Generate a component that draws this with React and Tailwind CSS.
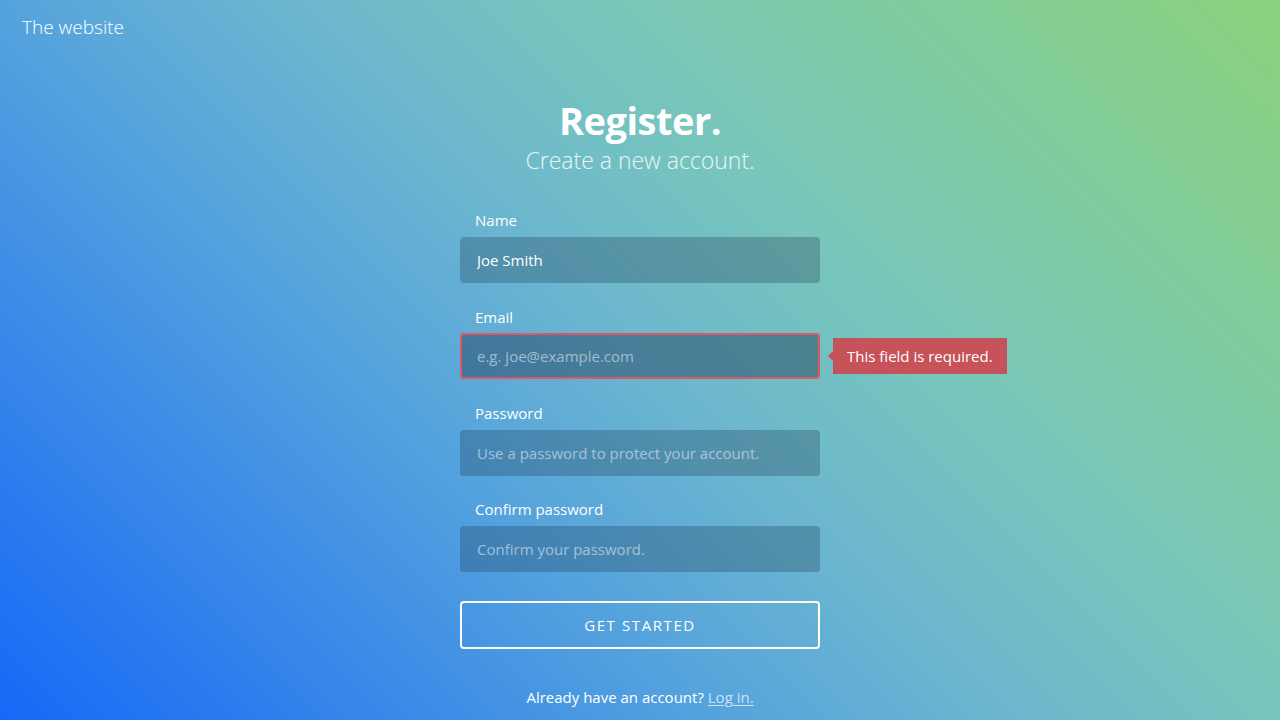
import { useState } from "react";

const Field = ({ label, placeholder, value, onChange, error, type = "text", gap = "mt-[7px]" }) => {
	return (
		<div className="flex flex-col">
			<label className="px-[15px] text-[15px] leading-[20px] text-white">{label}</label>
			<div className={`relative ${gap}`}>
				<input
					type={type}
					value={value}
					onChange={onChange}
					placeholder={placeholder}
					className={`h-[46px] w-full rounded-[4px] text-[15px] text-white placeholder:text-white/50 outline-none ${
						error ? "border-2 border-[#e4555f] bg-[#1c3a55]/45 px-[15px]" : "bg-[#1d3b52]/30 px-[17px]"
					}`}
				/>
				{error && (
					<div className="absolute left-[calc(100%+8px)] top-1/2 -translate-y-1/2 flex items-center">
						<span className="h-0 w-0 border-y-[6px] border-r-[6px] border-y-transparent border-r-[#c6525a]"></span>
						<span className="whitespace-nowrap bg-[#c6525a] px-[13px] py-[7px] text-[15px] leading-[20px] text-white outline outline-1 outline-[#b9565f]">
							{error}
						</span>
					</div>
				)}
			</div>
		</div>
	);
};

const App = () => {
	const [name, setName] = useState("Joe Smith");
	const [email, setEmail] = useState("");
	const [password, setPassword] = useState("");
	const [confirm, setConfirm] = useState("");

	return (
		<div
			className="relative flex min-h-screen w-full flex-col bg-[linear-gradient(45deg,#1668f7_0%,#55a3dd_36%,#6bb6cf_50%,#78c6bb_65%,#8ad27c_100%)] text-white"
			style={{ fontFamily: '"Open Sans", "Noto Sans", sans-serif' }}>
			<header className="px-[22px] pt-[14px]">
				<span className="text-[19px] font-light leading-[26px]">The website</span>
			</header>

			<main className="flex flex-col items-center">
				<h1 className="mt-[56px] text-[38px] font-bold leading-[48px] tracking-[-0.5px]">Register.</h1>
				<p className="text-[23px] font-light leading-[32px] text-white/85">Create a new account.</p>

				<form className="mt-[34px] flex w-[360px] flex-col" onSubmit={(e) => e.preventDefault()}>
					<Field label="Name" value={name} onChange={(e) => setName(e.target.value)} />
					<div className="mt-[24px]">
						<Field
							label="Email"
							gap="mt-[6px]"
							placeholder="e.g. joe@example.com"
							value={email}
							onChange={(e) => setEmail(e.target.value)}
							error="This field is required."
						/>
					</div>
					<div className="mt-[24px]">
						<Field
							label="Password"
							type="password"
							placeholder="Use a password to protect your account."
							value={password}
							onChange={(e) => setPassword(e.target.value)}
						/>
					</div>
					<div className="mt-[23px]">
						<Field
							label="Confirm password"
							type="password"
							placeholder="Confirm your password."
							value={confirm}
							onChange={(e) => setConfirm(e.target.value)}
						/>
					</div>
					<button
						type="submit"
						className="mt-[29px] h-[48px] w-full rounded-[4px] border-2 border-white text-[15px] font-medium tracking-[1.6px] text-white">
						GET STARTED
					</button>
				</form>

				<p className="mt-[38px] text-[15px] leading-[20px] text-white">
					Already have an account?{" "}
					<a href="#" className="text-white/70 underline underline-offset-2">
						Log in.
					</a>
				</p>
			</main>
		</div>
	);
};

export default App;
